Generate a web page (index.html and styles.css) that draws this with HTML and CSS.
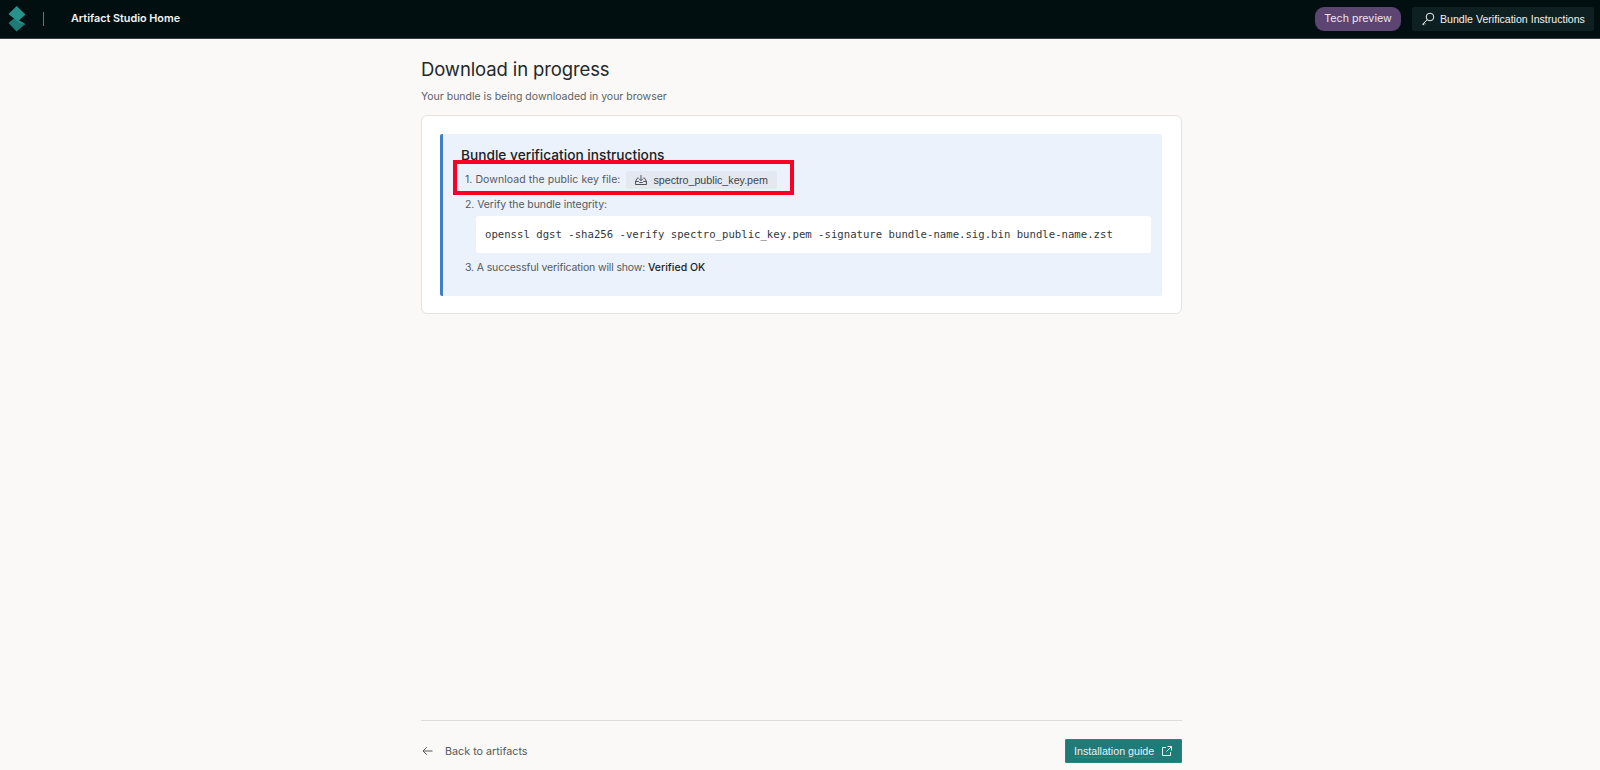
FILE: index.html
```html
<!DOCTYPE html>
<html lang="en">
<head>
<meta charset="utf-8">
<title>Artifact Studio</title>
<link rel="stylesheet" href="styles.css">
</head>
<body>
<header class="topbar">
  <svg class="logo" viewBox="0 0 18 27" width="18" height="27" aria-hidden="true">
    <path class="logo-low" d="M0.5 18 L6 13.5 L17.5 19 L8.5 26.5 Z"/>
    <path class="logo-top" d="M8.7 1 L17.5 9.5 L11 15.5 L17 18.5 L12 18.5 L0.5 9 Z"/>
  </svg>
  <span class="divider"></span>
  <a class="home">Artifact Studio Home</a>
  <span class="pill">Tech preview</span>
  <a class="verify-btn">
    <svg class="icon" viewBox="0 0 14 14" width="14" height="14" fill="none" stroke="currentColor" stroke-width="1" aria-hidden="true">
      <circle cx="9" cy="5" r="3.8"/>
      <path d="M6.3 7.7 L1.6 12.2 L3.2 13 M3.2 10.7 L4.6 12"/>
    </svg>
    <span>Bundle Verification Instructions</span>
  </a>
</header>
<main class="page">
  <h1 class="title">Download in progress</h1>
  <p class="subtitle">Your bundle is being downloaded in your browser</p>
  <section class="card">
    <div class="info">
      <h2 class="info-title">Bundle verification instructions</h2>
      <ol class="steps">
        <li class="step step-key">
          <span class="step-key-text">1. Download the public key file:</span>
          <a class="chip">
            <svg class="icon" viewBox="0 0 14 12" width="14" height="12" fill="none" stroke="currentColor" stroke-width="0.9" aria-hidden="true">
              <path d="M7 1 V6.5 M5 4.7 L7 6.7 L9 4.7 M4.5 4 H3.5 L1.5 7.5 V10.5 H12.5 V7.5 L10.5 4 H9.5 M1.5 7.5 H4.5 L5.5 8.5 H8.5 L9.5 7.5 H12.5"/>
            </svg>
            <span>spectro_public_key.pem</span>
          </a>
          <span class="mark"></span>
        </li>
        <li class="step step-verify">2. Verify the bundle integrity:</li>
        <li class="code-wrap"><pre class="code">openssl dgst -sha256 -verify spectro_public_key.pem -signature bundle-name.sig.bin bundle-name.zst</pre></li>
        <li class="step step-last">3. A successful verification will show: <strong class="ok">Verified OK</strong></li>
      </ol>
    </div>
  </section>
  <footer class="foot">
    <a class="back">
      <svg class="icon" viewBox="0 0 11 10" width="11" height="10" fill="none" stroke="currentColor" stroke-width="1" aria-hidden="true">
        <path d="M10.5 5 H1 M4.8 1.2 L1 5 L4.8 8.8"/>
      </svg>
      <span>Back to artifacts</span>
    </a>
    <a class="guide">
      <span class="guide-text">Installation guide</span>
      <svg class="icon" viewBox="0 0 10 10" width="10" height="10" fill="none" stroke="currentColor" stroke-width="1" aria-hidden="true">
        <path d="M4 1.5 H0.5 V9.5 H8.5 V6 M5.5 0.5 H9.5 V4.5 M9.5 0.5 L4.5 5.5"/>
      </svg>
    </a>
  </footer>
</main>
</body>
</html>
```
FILE: styles.css
```css
* { box-sizing: border-box; }
html, body { margin: 0; height: 770px; overflow: hidden; }
body {
  background: #faf9f7;
  color: #1c2226;
  font-family: Inter, "Liberation Sans", sans-serif;
  display: flex;
  flex-direction: column;
}
.icon { flex: none; display: block; }
.topbar {
  height: 39px;
  flex: none;
  background: #020f11;
  border-bottom: 1px solid #3a3d3e;
  display: flex;
  align-items: center;
  padding: 0 6px 1px 8px;
  color: #f2f4f4;
}
.logo { display: block; margin-top: -1px; }
.logo-top { fill: #27918b; }
.logo-low { fill: #1d7a75; }
.divider { width: 1px; height: 14px; background: #6b7475; margin-left: 17px; }
.home { margin-left: 27px; font-size: 10.8px; font-weight: 600; flex: 1; }
.pill {
  width: 86px;
  height: 24px;
  border-radius: 9px;
  background: #5c4570;
  color: #ece6f0;
  font-size: 10.7px;
  display: flex;
  align-items: center;
  justify-content: center;
}
.verify-btn {
  margin-left: 11px;
  width: 182px;
  height: 24px;
  border-radius: 2px;
  background: #0e2022;
  font-family: "Liberation Sans", sans-serif;
  font-size: 10.6px;
  display: flex;
  align-items: center;
  gap: 5px;
  padding-left: 9px;
  white-space: nowrap;
}
.page {
  width: 761px;
  margin-left: 421px;
  flex: 1;
  display: flex;
  flex-direction: column;
  padding-top: 16px;
}
.title { margin: 0; font-size: 18.5px; letter-spacing: -0.12px; line-height: 28px; font-weight: 400; color: #23282b; }
.subtitle { margin: 5px 0 0; font-size: 10.5px; line-height: 18px; color: #5d6266; }
.card {
  margin-top: 9px;
  background: #fff;
  border: 1px solid #e6e3df;
  border-radius: 6px;
  padding: 18px 19px 17px 18px;
}
.info {
  background: #ebf2fc;
  border-left: 3px solid #3f7fc9;
  border-radius: 2px;
  padding: 11px 0 20px 18px;
  height: 162px;
}
.info-title { margin: 0; font-size: 13.7px; line-height: 20px; font-weight: 500; color: #1c2226; }
.steps { list-style: none; margin: 0; padding: 6px 0 0 4px; }
.step { font-size: 10.5px; line-height: 18px; color: #54595e; }
.step-key { position: relative; display: flex; align-items: center; gap: 6px; }
.step-key-text { letter-spacing: 0.07px; }
.step-verify { margin-top: 7px; letter-spacing: -0.07px; }
.step-last { margin-top: 6px; letter-spacing: -0.15px; }
.ok { font-weight: 500; color: #1c2226; letter-spacing: 0; }
.chip {
  width: 151px;
  height: 18px;
  background: #e4e9f1;
  border-radius: 2px;
  display: flex;
  align-items: center;
  gap: 5px;
  padding-left: 8px;
  color: #3d4348;
  font-family: "Liberation Sans", sans-serif;
  font-size: 10.7px;
}
.mark {
  position: absolute;
  left: -12px;
  top: -11px;
  width: 341px;
  height: 35px;
  border: 4px solid #fa0024;
  pointer-events: none;
}
.code-wrap { margin: 2px 11px 0 11px; }
.code {
  margin: 0;
  height: 37px;
  background: #fff;
  border-radius: 3px;
  padding: 0 9px;
  font-family: "DejaVu Sans Mono", monospace;
  font-size: 10.65px;
  line-height: 37px;
  color: #33383c;
}
.foot {
  margin-top: auto;
  height: 50px;
  border-top: 1px solid #dfdcd8;
  display: flex;
  justify-content: space-between;
  padding-top: 18px;
}
.back { display: flex; align-items: center; gap: 12px; height: 24px; font-size: 10.75px; color: #54595e; padding-left: 1px; }
.guide {
  width: 117px;
  height: 24px;
  background: #1f7a78;
  border: 1px solid #2a8482;
  border-radius: 1px;
  display: flex;
  align-items: center;
  gap: 8px;
  padding-left: 8px;
  color: #e8f2f2;
  font-family: "Liberation Sans", sans-serif;
  font-size: 10.7px;
  white-space: nowrap;
}
.guide-text { text-decoration: underline; text-decoration-color: #2f7f9f; text-underline-offset: 2px; }
```
